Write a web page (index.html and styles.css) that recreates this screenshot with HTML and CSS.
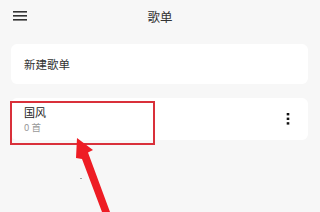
FILE: index.html
```html
<!DOCTYPE html>
<html lang="zh">
<head>
<meta charset="utf-8">
<link rel="stylesheet" href="styles.css">
</head>
<body>
<div class="page">
  <header class="topbar">
    <svg class="menu" width="14" height="10" viewBox="0 0 14 10"><rect x="0" y="0" width="14" height="1.6" fill="#333"/><rect x="0" y="4" width="14" height="1.6" fill="#333"/><rect x="0" y="8" width="14" height="1.6" fill="#333"/></svg>
    <div class="title">歌单</div>
  </header>
  <main class="list">
    <div class="card new">新建歌单</div>
    <div class="card item">
      <div class="info">
        <div class="name">国风</div>
        <div class="count">0 首</div>
      </div>
      <svg class="more" width="4" height="12" viewBox="0 0 4 12"><rect x="0.7" y="0" width="2.6" height="2.4" fill="#111"/><rect x="0.7" y="4.6" width="2.6" height="2.4" fill="#111"/><rect x="0.7" y="9.2" width="2.6" height="2.4" fill="#111"/></svg>
    </div>
  </main>
  <div class="highlight"></div>
  <svg class="arrow" width="320" height="212" viewBox="0 0 320 212">
    <polygon points="77,138 93,150 88,152.5 110,212 102,212 82,159 76,158" fill="#ee1c24"/>
    <rect x="80.5" y="178" width="1" height="1" fill="#555"/>
  </svg>
</div>
</body>
</html>
```
FILE: styles.css
```css
html, body {
  margin: 0;
  padding: 0;
  background: #f7f7f7;
}
.page {
  position: relative;
  width: 320px;
  height: 212px;
  overflow: hidden;
  font-family: "Noto Sans CJK SC", "Noto Sans", sans-serif;
  color: #333;
}
.topbar {
  position: relative;
  height: 32px;
  display: flex;
  align-items: center;
  justify-content: center;
}
.menu {
  position: absolute;
  left: 13px;
  top: 11px;
}
.title {
  font-size: 12.5px;
  line-height: 16px;
  color: #333;
  margin-top: 1px;
}
.list {
  padding: 12px 12px 0 11px;
  display: flex;
  flex-direction: column;
  gap: 14px;
}
.card {
  background: #fff;
  border-radius: 6px;
  box-sizing: border-box;
}
.new {
  height: 40px;
  padding-left: 13px;
  display: flex;
  align-items: center;
  font-size: 11.5px;
  color: #333;
}
.item {
  height: 42px;
  padding: 0 18px 0 13px;
  display: flex;
  align-items: center;
  justify-content: space-between;
}
.info {
  display: flex;
  flex-direction: column;
  gap: 2px;
}
.name {
  font-size: 11px;
  line-height: 14px;
  color: #222;
}
.count {
  font-size: 9.5px;
  line-height: 12px;
  color: #999;
}
.highlight {
  position: absolute;
  left: 10px;
  top: 101px;
  width: 145px;
  height: 44px;
  border: 2px solid #d9303a;
  box-sizing: border-box;
}
.arrow {
  position: absolute;
  left: 0;
  top: 0;
}
```
